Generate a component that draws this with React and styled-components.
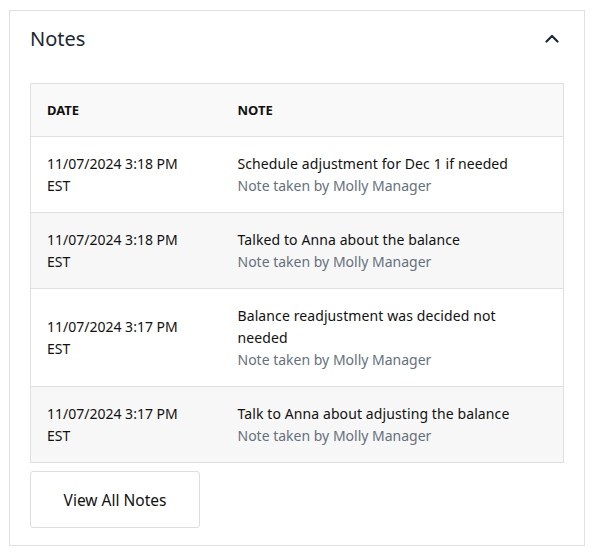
import React from "react";
import styled, { createGlobalStyle } from "styled-components";

const Global = createGlobalStyle`
  html, body { margin: 0; padding: 0; background: #ffffff; }
  body { font-family: "Noto Sans", "Inter", sans-serif; }
  * { box-sizing: border-box; }
`;

const Page = styled.div`
  padding: 10px 14px 12px 9px;
  width: 599px;
`;

const Card = styled.section`
  border: 1px solid #e0e0e0;
  background: #fff;
  padding: 0 20px 17px 20px;
`;

const Header = styled.div`
  display: flex;
  align-items: center;
  justify-content: space-between;
  height: 55px;
  margin-bottom: 17px;
`;

const Title = styled.h2`
  margin: 0;
  font-size: 20px;
  font-weight: 400;
  color: #1d2733;
`;

const Toggle = styled.button`
  border: 0;
  background: transparent;
  padding: 0;
  width: 24px;
  height: 24px;
  display: flex;
  align-items: center;
  justify-content: center;
  cursor: pointer;
`;

const Table = styled.table`
  width: 100%;
  border-collapse: collapse;
  border: 1px solid #e0e0e0;
`;

const HeadCell = styled.th`
  text-align: left;
  font-size: 13px;
  font-weight: 700;
  color: #111;
  padding: 16px;
  height: 53px;
  background: #f9f9f9;
  border-bottom: 1px solid #e0e0e0;
  width: ${(p) => p.$w || "auto"};
`;

const Row = styled.tr`
  background: ${(p) => (p.$alt ? "#f7f7f7" : "#ffffff")};
  border-bottom: 1px solid #e0e0e0;
`;

const Cell = styled.td`
  padding: 16px ${(p) => (p.$wide ? "20px" : "16px")} 16px 16px;
  font-size: 14px;
  line-height: 21.6px;
  color: #111;
  vertical-align: middle;
`;

const NoteText = styled.div`
  color: #111;
  letter-spacing: 0.1px;
`;

const Author = styled.div`
  color: #66707c;
`;

const ViewButton = styled.button`
  margin-top: 8px;
  width: 170px;
  height: 57px;
  border: 1px solid #dedede;
  border-radius: 3px;
  background: #fff;
  font-family: inherit;
  font-size: 15.5px;
  color: #111;
  cursor: pointer;
`;

const notes = [
  { date: "11/07/2024 3:18 PM", tz: "EST", text: "Schedule adjustment for Dec 1 if needed" },
  { date: "11/07/2024 3:18 PM", tz: "EST", text: "Talked to Anna about the balance" },
  { date: "11/07/2024 3:17 PM", tz: "EST", text: "Balance readjustment was decided not needed" },
  { date: "11/07/2024 3:17 PM", tz: "EST", text: "Talk to Anna about adjusting the balance" },
];

export default function App() {
  return (
    <Page>
      <Global />
      <Card>
        <Header>
          <Title>Notes</Title>
          <Toggle aria-label="Collapse">
            <svg width="14" height="9" viewBox="0 0 14 9" fill="none">
              <path d="M1.5 7.5L7 2L12.5 7.5" stroke="#1d2733" strokeWidth="2.2" strokeLinecap="round" strokeLinejoin="round" />
            </svg>
          </Toggle>
        </Header>
        <Table>
          <thead>
            <tr>
              <HeadCell $w="191px">DATE</HeadCell>
              <HeadCell>NOTE</HeadCell>
            </tr>
          </thead>
          <tbody>
            {notes.map((n, i) => (
              <Row key={i} $alt={i % 2 === 1}>
                <Cell>
                  {n.date}
                  <br />
                  {n.tz}
                </Cell>
                <Cell $wide>
                  <NoteText>{n.text}</NoteText>
                  <Author>Note taken by Molly Manager</Author>
                </Cell>
              </Row>
            ))}
          </tbody>
        </Table>
        <ViewButton>View All Notes</ViewButton>
      </Card>
    </Page>
  );
}
